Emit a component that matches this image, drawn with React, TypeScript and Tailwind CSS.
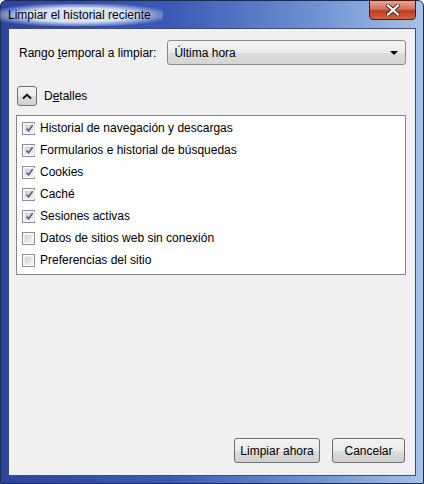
import { useState } from "react";

const items = [
  { label: "Historial de navegación y descargas", checked: true },
  { label: "Formularios e historial de búsquedas", checked: true },
  { label: "Cookies", checked: true },
  { label: "Caché", checked: true },
  { label: "Sesiones activas", checked: true },
  { label: "Datos de sitios web sin conexión", checked: false },
  { label: "Preferencias del sitio", checked: false },
];

function Checkbox({ checked }: { checked: boolean }) {
  return (
    <span className="w-[13px] h-[13px] border border-[#8f8f8f] bg-white p-px flex shrink-0">
      <span className="flex-1 flex items-center justify-center bg-[linear-gradient(135deg,#cfcfcf,#f4f4f4)] border border-[#eeeeee]">
        {checked && (
          <svg width="9" height="9" viewBox="0 0 9 9">
            <path d="M1.5 4.5 L3.6 6.8 L7.6 1.2" fill="none" stroke="#4a6193" strokeWidth="1.6" />
          </svg>
        )}
      </span>
    </span>
  );
}

export default function App() {
  const [checks, setChecks] = useState(items.map((i) => i.checked));

  return (
    <div
      className="w-[424px] h-[484px] flex flex-col px-[7px] pb-[7px] rounded-t-[6px] border border-[#1d2b52] bg-[linear-gradient(90deg,#2c44a0_0%,#3a59b6_40%,#6f93d2_75%,#a6c2ea_100%)] text-[12px] text-black"
      style={{ fontFamily: '"Liberation Sans", Arial, sans-serif' }}
    >
      <div className="h-[27px] flex items-start justify-between">
        <span className="mt-[3px] -ml-[12px] px-[12px] py-[3px] text-[12px] leading-[16px] bg-[radial-gradient(ellipse_at_center,rgba(225,234,250,0.95)_45%,rgba(225,234,250,0)_80%)]">
          Limpiar el historial reciente
        </span>
        <button className="-mt-px w-[47px] h-[20px] rounded-b-[4px] border border-[#4d1a12] bg-[linear-gradient(180deg,#e4a595_0%,#d2735e_45%,#c23a20_55%,#d0644a_100%)] flex items-center justify-center">
          <svg width="14" height="12" viewBox="0 0 14 12">
            <path d="M2 1.5 L12 10.5 M12 1.5 L2 10.5" stroke="#3b2a2a" strokeWidth="4" strokeLinecap="square" />
            <path d="M2 1.5 L12 10.5 M12 1.5 L2 10.5" stroke="#ffffff" strokeWidth="2.2" strokeLinecap="square" />
          </svg>
        </button>
      </div>

      <div className="flex-1 flex flex-col border border-[#3b4b74] bg-[#f0f0f0] px-[7px]">
        <div className="mt-[11px] flex items-center gap-[11px] pl-[3px] pr-[2px]">
          <span className="whitespace-nowrap">
            Rango <span className="underline">t</span>emporal a limpiar:
          </span>
          <div className="flex-1 h-[25px] rounded-[3px] border border-[#8b8b8b] bg-[linear-gradient(180deg,#f3f3f3_0%,#ebebeb_50%,#dddddd_51%,#d5d5d5_100%)] flex items-center justify-between pl-[6px] pr-[7px]">
            <span>Última hora</span>
            <svg width="8" height="4" viewBox="0 0 8 4">
              <path d="M0 0 H8 L4 4 Z" fill="#000" />
            </svg>
          </div>
        </div>

        <div className="mt-[21px] flex items-center gap-[7px]">
          <button className="ml-px w-[20px] h-[20px] rounded-[3px] border border-[#707070] bg-[linear-gradient(180deg,#f2f2f2_0%,#ebebeb_50%,#dddddd_51%,#cfcfcf_100%)] flex items-center justify-center">
            <svg width="10" height="7" viewBox="0 0 10 7">
              <path d="M1 5.5 L5 1.8 L9 5.5" fill="none" stroke="#111" strokeWidth="2" />
            </svg>
          </button>
          <span>
            D<span className="underline">e</span>talles
          </span>
        </div>

        <div className="mt-[9px] mr-[2px] h-[160px] border border-[#828790] bg-white pt-px px-[5px]">
          {items.map((item, i) => (
            <label key={item.label} className="h-[22px] flex items-center gap-[5px] cursor-default">
              <input
                type="checkbox"
                className="hidden"
                checked={checks[i]}
                onChange={() => setChecks(checks.map((c, j) => (j === i ? !c : c)))}
              />
              <Checkbox checked={checks[i]} />
              <span>{item.label}</span>
            </label>
          ))}
        </div>

        <div className="mt-auto mb-[12px] mr-[3px] flex justify-end gap-[12px]">
          <button className="w-[86px] h-[25px] rounded-[3px] border border-[#707070] bg-[linear-gradient(180deg,#f2f2f2_0%,#ebebeb_50%,#dddddd_51%,#cfcfcf_100%)]">
            Limpiar ahora
          </button>
          <button className="w-[73px] h-[25px] rounded-[3px] border border-[#707070] bg-[linear-gradient(180deg,#f2f2f2_0%,#ebebeb_50%,#dddddd_51%,#cfcfcf_100%)]">
            Cancelar
          </button>
        </div>
      </div>
    </div>
  );
}
